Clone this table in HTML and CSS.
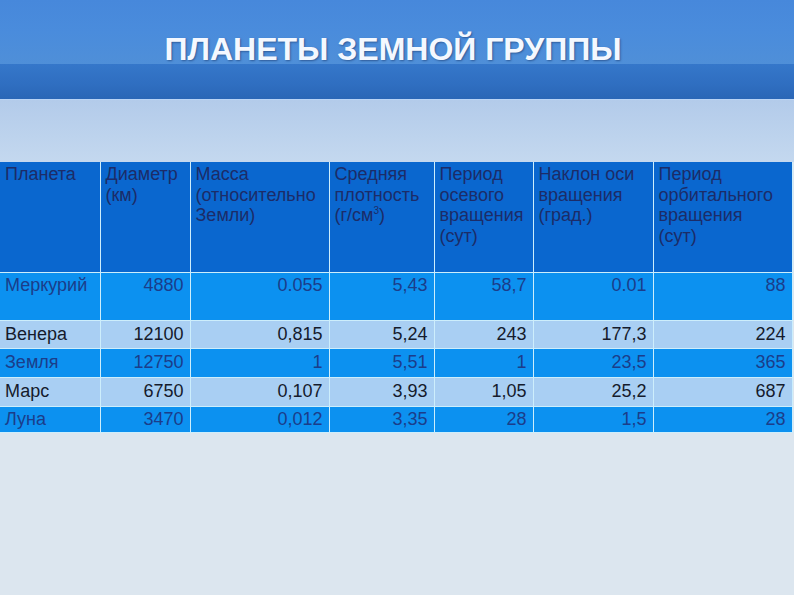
FILE: index.html
```html
<!DOCTYPE html>
<html lang="ru">
<head>
<meta charset="utf-8">
<title>Планеты земной группы</title>
<link rel="stylesheet" href="styles.css">
</head>
<body>
<div class="slide">
  <header class="head">
    <div class="band-top"><h1 class="title">ПЛАНЕТЫ ЗЕМНОЙ ГРУППЫ</h1></div>
    <div class="band-bottom"></div>
  </header>
  <div class="spacer"></div>
  <table class="planets">
    <colgroup>
      <col class="c1"><col class="c2"><col class="c3"><col class="c4"><col class="c5"><col class="c6"><col class="c7">
    </colgroup>
    <thead>
      <tr>
        <th>Планета</th>
        <th>Диаметр (км)</th>
        <th>Масса (относительно Земли)</th>
        <th>Средняя плотность (г/см<sup>3</sup>)</th>
        <th>Период осевого вращения (сут)</th>
        <th>Наклон оси вращения (град.)</th>
        <th>Период орбитального вращения<br>(сут)</th>
      </tr>
    </thead>
    <tbody>
      <tr class="dark tall"><td>Меркурий</td><td>4880</td><td>0.055</td><td>5,43</td><td>58,7</td><td>0.01</td><td>88</td></tr>
      <tr class="light r2"><td>Венера</td><td>12100</td><td>0,815</td><td>5,24</td><td>243</td><td>177,3</td><td>224</td></tr>
      <tr class="dark r3"><td>Земля</td><td>12750</td><td>1</td><td>5,51</td><td>1</td><td>23,5</td><td>365</td></tr>
      <tr class="light r4"><td>Марс</td><td>6750</td><td>0,107</td><td>3,93</td><td>1,05</td><td>25,2</td><td>687</td></tr>
      <tr class="dark r5"><td>Луна</td><td>3470</td><td>0,012</td><td>3,35</td><td>28</td><td>1,5</td><td>28</td></tr>
    </tbody>
  </table>
</div>
</body>
</html>
```
FILE: styles.css
```css
html, body {
  margin: 0;
  padding: 0;
}
body {
  width: 794px;
  height: 595px;
  overflow: hidden;
  background: #dce6ef;
  font-family: "Liberation Sans", Arial, sans-serif;
}
.slide {
  width: 794px;
  height: 595px;
  display: flex;
  flex-direction: column;
}
.head {
  display: flex;
  flex-direction: column;
}
.band-top {
  height: 64px;
  background: linear-gradient(to bottom, #4788db 0%, #4a8cdc 50%, #4f8fd8 100%);
  display: flex;
  align-items: flex-end;
  justify-content: center;
}
.title {
  margin: 0 8px 0 0;
  font-size: 32px;
  font-weight: bold;
  color: #f4f8ff;
  line-height: 32px;
  height: 30px;
  transform: translateY(-1px);
  text-shadow: 1px 1px 2px rgba(20, 50, 100, 0.55);
}
.band-bottom {
  height: 36px;
  background: linear-gradient(to bottom, #3577ca 0%, #2f6ec0 60%, #2a66b6 100%);
  border-bottom: 1px solid #b9d3f5;
  box-sizing: border-box;
}
.spacer {
  height: 62px;
  background: linear-gradient(to bottom, #b3cbea 0%, #bdd3ed 60%, #c4d8ef 100%);
}
.planets {
  width: 792px;
  border-collapse: collapse;
  table-layout: fixed;
  font-size: 18px;
  line-height: 20.5px;
}
.c1 { width: 100px; }
.c2 { width: 90px; }
.c3 { width: 139px; }
.c4 { width: 105px; }
.c5 { width: 99px; }
.c6 { width: 120px; }
.c7 { width: 139px; }
.planets th, .planets td {
  border: 1px solid #cdeefc;
  vertical-align: top;
  padding: 3px 6px 0 5px;
  box-sizing: border-box;
  overflow: hidden;
}
.planets tr > :first-child { border-left: none; }
.planets thead tr th { border-top: none; }
.planets th {
  background: #0a67cf;
  color: #1c2c68;
  font-weight: normal;
  text-align: left;
  height: 110px;
  padding-top: 2px;
}
.planets sup {
  font-size: 10px;
  line-height: 10px;
  vertical-align: 7px;
}
.planets td {
  text-align: right;
}
.planets td:first-child {
  text-align: left;
}
.dark td {
  background: #0c91f0;
  color: #1b3d8a;
}
.light td {
  background: #a9cff3;
  color: #151b2c;
}
.tall td { height: 48px; padding-top: 2px; }
.r2 td { height: 28px; padding-top: 3px; }
.r3 td { height: 29px; padding-top: 3px; }
.r4 td { height: 29px; padding-top: 3px; }
.r5 td { height: 26px; padding-top: 2px; }
```
